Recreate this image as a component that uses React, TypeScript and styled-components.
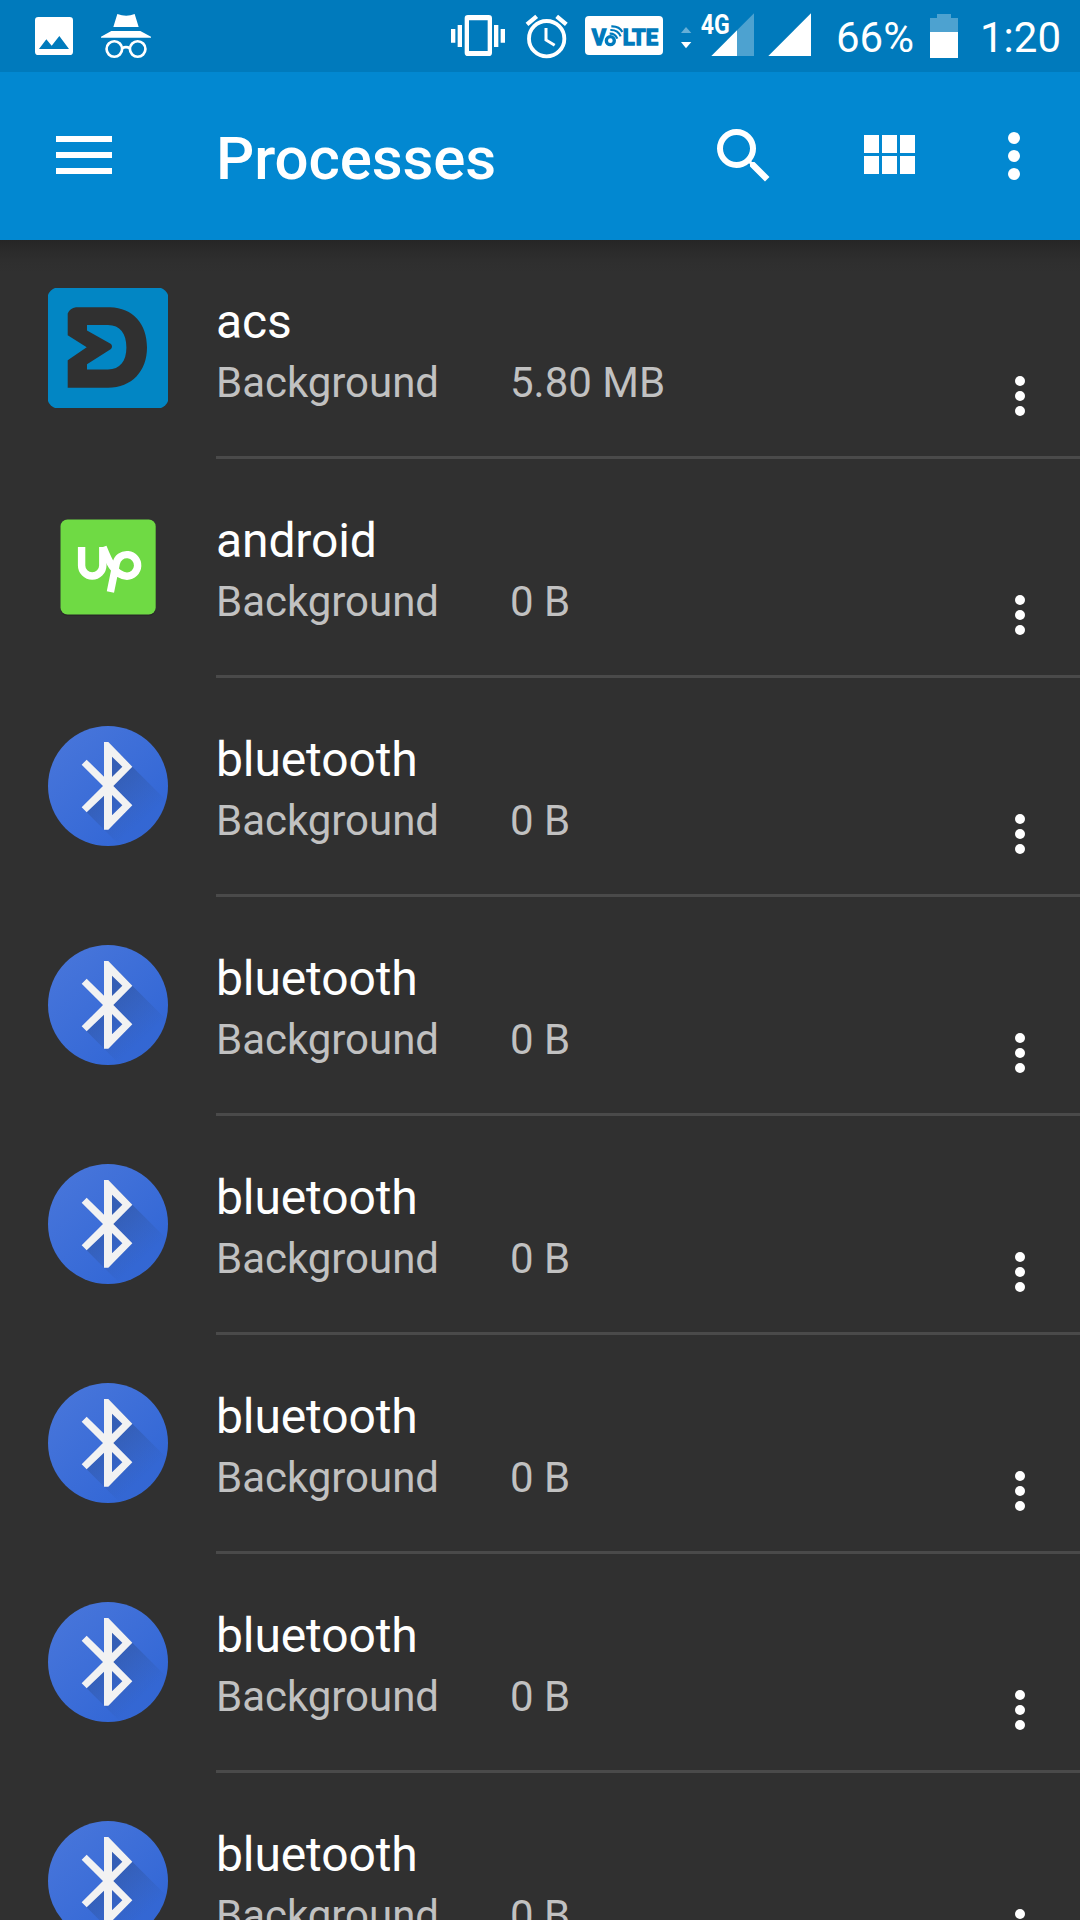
import React from "react";
import styled, { createGlobalStyle } from "styled-components";

const GlobalStyle = createGlobalStyle`
  * { box-sizing: border-box; }
  body { margin: 0; background: #303030; overflow: hidden; }
`;

const Screen = styled.main`
  display: flex;
  flex-direction: column;
  width: 1080px;
  height: 1920px;
  overflow: hidden;
  background: #303030;
  color: #fff;
  font-family: Roboto, "Noto Sans", sans-serif;
`;

const StatusBar = styled.header`
  display: flex;
  flex: none;
  justify-content: space-between;
  height: 72px;
  padding: 0 17px 0 33px;
  background: #007abc;
`;

const StatusGroup = styled.div`
  display: flex;
  align-items: center;
`;

const StatusGlyph = styled.svg<{ $w: number; $gap?: number }>`
  display: block;
  flex: none;
  width: ${(p) => p.$w}px;
  height: 72px;
  margin-right: ${(p) => p.$gap ?? 0}px;
`;

const StatusText = styled.span<{ $w: number; $gap?: number }>`
  flex: none;
  width: ${(p) => p.$w}px;
  margin-right: ${(p) => p.$gap ?? 0}px;
  padding-top: 3px;
  font-size: 42px;
  line-height: 50px;
  white-space: nowrap;
`;

const Toolbar = styled.nav`
  display: flex;
  flex: none;
  align-items: center;
  height: 168px;
  padding: 0 30px 0 56px;
  background: #0288d1;
`;

const MenuButton = styled.button`
  display: flex;
  flex-direction: column;
  gap: 10px;
  width: 56px;
  margin-right: 104px;
  padding: 0 0 2px;
  border: 0;
  background: none;
`;

const MenuLine = styled.span`
  height: 6px;
  background: #fff;
`;

const Heading = styled.h1`
  flex: 1;
  margin: 0;
  padding-top: 6px;
  font-size: 60px;
  font-weight: 500;
  letter-spacing: -0.12px;
  line-height: 70px;
`;

const ToolbarActions = styled.div`
  display: flex;
  align-items: center;
`;

const Icon = styled.svg<{ $size: number; $gap?: number }>`
  display: block;
  flex: none;
  width: ${(p) => p.$size}px;
  height: ${(p) => p.$size}px;
  margin-right: ${(p) => p.$gap ?? 0}px;
  fill: #fff;
`;

const List = styled.ul`
  display: flex;
  flex-direction: column;
  flex: 1;
  min-height: 0;
  margin: 0;
  padding: 0;
  list-style: none;
  background: linear-gradient(#252525 0, #2a2a2a 9px, #2e2e2e 20px, #303030 32px) no-repeat 0 0 / 100% 32px;
`;

const Row = styled.li`
  display: flex;
  flex: none;
  height: 219px;
  padding-left: 48px;
`;

const AppIcon = styled.svg`
  display: block;
  flex: none;
  width: 120px;
  height: 120px;
  margin: 48px 48px 0 0;
  overflow: visible;
`;

const RowBody = styled.div`
  display: flex;
  flex: 1;
  justify-content: space-between;
  padding: 54px 30px 0 0;
  border-bottom: 3px solid #4a4a4a;
`;

const Name = styled.div`
  font-size: 48px;
  letter-spacing: -0.12px;
  line-height: 56px;
`;

const Details = styled.div`
  display: flex;
  gap: 71px;
  margin-top: 8px;
  color: #c1c1c1;
  font-size: 42px;
  line-height: 50px;
  white-space: nowrap;
`;

const State = styled.span`
  letter-spacing: -0.03px;
`;

const RowMenu = styled.div`
  padding-top: 72px;
`;

const MoreIcon = ({ size }: { size: number }) => (
  <Icon viewBox="0 0 24 24" $size={size}>
    <circle cx="12" cy="6" r="2" />
    <circle cx="12" cy="12" r="2" />
    <circle cx="12" cy="18" r="2" />
  </Icon>
);

const AcsIcon = () => (
  <AppIcon viewBox="0 0 120 120">
    <path
      fill="#0286c4"
      d="M7 0H113Q115 0.5 117.3 2.7Q119.5 5 120 7V113Q119.5 115 117.3 117.3Q115 119.5 113 120H7Q5 119.5 2.7 117.3Q0.5 115 0 113V7Q0.5 5 2.7 2.7Q5 0.5 7 0Z"
    />
    <path
      fill="#303030"
      fillRule="evenodd"
      d="M19.7 25.5Q22 20 28 19.3H62C85 19.8 99 36 99 59.5C99 83 84 99.7 60 99.7H19.7V72.3L38.7 59.3L19.7 47.3ZM39 37V42.5L63 56Q65 58.5 63 61L39 76.3V81.5H60C72 81.5 78.4 73 78.4 59.5C78.4 45.5 72 37 60 37Z"
    />
  </AppIcon>
);

const UpIcon = () => (
  <AppIcon viewBox="0 0 120 120">
    <rect x="12.5" y="14" width="95.2" height="95" rx="7" fill="#222" opacity=".55" />
    <rect x="12.5" y="12.5" width="95.2" height="95" rx="7" fill="#6fda44" />
    <g fill="none" stroke="#fff" strokeWidth="7.4">
      <path d="M33.6 40V58.4a10.6 10.6 0 0 0 21.2 0V40" />
      <path d="M55 40C59 50 66 69.2 79 69.2a10.8 10.8 0 1 0 -10.8 -12.6L62.4 85" />
    </g>
  </AppIcon>
);

const BluetoothIcon = ({ id }: { id: string }) => (
  <AppIcon viewBox="54 48 360 360">
    <defs>
      <linearGradient id={`${id}-disc`} x1="0.1" y1="0.1" x2="0.75" y2="0.8">
        <stop offset="0" stopColor="#4775da" />
        <stop offset="1" stopColor="#3468d6" />
      </linearGradient>
      <linearGradient id={`${id}-shade`} gradientUnits="userSpaceOnUse" x1="230" y1="220" x2="335" y2="335">
        <stop offset="0" stopColor="#2f549f" stopOpacity=".6" />
        <stop offset="0.5" stopColor="#2f549f" stopOpacity=".32" />
        <stop offset="1" stopColor="#2f549f" stopOpacity=".05" />
      </linearGradient>
      <clipPath id={`${id}-clip`}>
        <circle cx="234" cy="228" r="180" />
      </clipPath>
    </defs>
    <circle cx="234" cy="228" r="180" fill={`url(#${id}-disc)`} />
    <g clipPath={`url(#${id}-clip)`}>
      <path fill={`url(#${id}-shade)`} d="M235 96L307 170L447 310V450H313L170 307L222 255Z" />
    </g>
    <path
      fill="#f2f2f2"
      fillRule="evenodd"
      d="M222 96H235L307 170L250 228L307 286L235 359H222V257L170 307L155 292L219 228L155 164L170 149L222 200ZM246 140V201L277 170ZM246 255V316L277 286Z"
    />
  </AppIcon>
);

type Kind = "acs" | "up" | "bluetooth";

const processes: { name: string; size: string; kind: Kind }[] = [
  { name: "acs", size: "5.80 MB", kind: "acs" },
  { name: "android", size: "0 B", kind: "up" },
  ...Array.from({ length: 6 }, () => ({ name: "bluetooth", size: "0 B", kind: "bluetooth" as Kind })),
];

const StatusIcons = () => (
  <StatusBar>
    <StatusGroup>
      <StatusGlyph viewBox="99 0 126 216" $w={42} $gap={25}>
        <path
          fill="#fff"
          fillRule="evenodd"
          d="M115 51H209Q219 51 219 61V155Q219 165 209 165H115Q105 165 105 155V61Q105 51 115 51ZM117 147H207L178 108L155 137L139 118Z"
        />
      </StatusGlyph>
      <StatusGlyph viewBox="300 0 156 216" $w={52}>
        <path fill="#fff" d="M352 42Q379 53 404 42L416 81H340ZM334 93H421L453 110V113H303V110Z" />
        <g fill="none" stroke="#fff" strokeWidth="8">
          <circle cx="343" cy="147" r="23.3" />
          <circle cx="413" cy="147" r="23.3" />
          <path d="M366 145Q378 138 390 145" />
        </g>
      </StatusGlyph>
    </StatusGroup>
    <StatusGroup>
      <StatusGlyph viewBox="60 0 168 216" $w={56} $gap={18}>
        <path
          fill="#fff"
          fillRule="evenodd"
          d="M114 45H176Q186 45 186 55V158Q186 168 176 168H114Q104 168 104 158V55Q104 45 114 45ZM117 61V153H173V61ZM83 75H96V141H83ZM63 87H76V128H63ZM192 75H205V141H192ZM212 87H225V128H212Z"
        />
      </StatusGlyph>
      <StatusGlyph viewBox="282 0 132 216" $w={44} $gap={17}>
        <g fill="none" stroke="#fff">
          <circle cx="350" cy="116" r="53" strokeWidth="11.5" />
          <path strokeWidth="9" d="M348 84V120L374 136" />
          <path strokeWidth="13" d="M291 73L320 49M380 49L409 73" />
        </g>
      </StatusGlyph>
      <StatusGlyph viewBox="465 0 234 216" $w={78} $gap={17}>
        <rect x="465" y="48" width="234" height="117" rx="12" fill="#fff" />
        <g fill="#007abc" stroke="#007abc" strokeWidth="4" fontFamily="Roboto, sans-serif" fontWeight="700" fontSize="65">
          <text x="485" y="134" textLength="43" lengthAdjust="spacingAndGlyphs">V</text>
          <text x="578" y="134" textLength="106" lengthAdjust="spacingAndGlyphs">LTE</text>
        </g>
        <g fill="none" stroke="#007abc">
          <circle cx="541" cy="122" r="12" strokeWidth="10" />
          <path strokeWidth="6.5" d="M539 101Q555 100 562 116M541 90Q564 89 572 109M544 79Q568 78 577 96" />
        </g>
      </StatusGlyph>
      <StatusGlyph viewBox="750 0 222 216" $w={74} $gap={14}>
        <path fill="#fff" opacity=".4" d="M753 99L768 81L784 99Z" />
        <path fill="#fff" d="M753 126H784L768 145Z" />
        <path fill="#fff" opacity=".3" d="M921 91L972 40V168H921Z" />
        <path fill="#fff" d="M844 168L921 91V168Z" />
        <text
          x="812"
          y="102"
          fill="#fff"
          fontFamily="Roboto, sans-serif"
          fontWeight="700"
          fontSize="82"
          textLength="87"
          lengthAdjust="spacingAndGlyphs"
        >
          4G
        </text>
      </StatusGlyph>
      <StatusGlyph viewBox="54 0 132 216" $w={44} $gap={24}>
        <path fill="#fff" d="M55 168L183 40V168Z" />
      </StatusGlyph>
      <StatusText $w={78} $gap={16}>66%</StatusText>
      <StatusGlyph viewBox="540 0 84 216" $w={28} $gap={22}>
        <path fill="#fff" opacity=".3" d="M540 54H561V42H603V54H624V96H540Z" />
        <path fill="#fff" d="M540 96H624V174H540Z" />
      </StatusGlyph>
      <StatusText $w={83}>1:20</StatusText>
    </StatusGroup>
  </StatusBar>
);

export default function App() {
  return (
    <Screen>
      <GlobalStyle />
      <StatusIcons />
      <Toolbar>
        <MenuButton aria-label="Menu">
          <MenuLine />
          <MenuLine />
          <MenuLine />
        </MenuButton>
        <Heading>Processes</Heading>
        <ToolbarActions>
          <Icon viewBox="0 0 24 24" $size={72} $gap={72}>
            <path d="M15.5 14h-.79l-.28-.27A6.471 6.471 0 0 0 16 9.5 6.5 6.5 0 1 0 9.5 16c1.61 0 3.09-.59 4.23-1.57l.27.28v.79l5 4.99L20.49 19l-4.99-5zm-6 0C7.01 14 5 11.99 5 9.5S7.01 5 9.5 5 14 7.01 14 9.5 11.99 14 9.5 14z" />
          </Icon>
          <Icon viewBox="0 0 24 24" $size={72} $gap={54}>
            <path d="M4 11h5V5H4v6zm0 7h5v-6H4v6zm6 0h5v-6h-5v6zm6 0h5v-6h-5v6zm-6-7h5V5h-5v6zm6-6v6h5V5h-5z" />
          </Icon>
          <MoreIcon size={72} />
        </ToolbarActions>
      </Toolbar>
      <List>
        {processes.map((p, i) => (
          <Row key={i}>
            {p.kind === "acs" && <AcsIcon />}
            {p.kind === "up" && <UpIcon />}
            {p.kind === "bluetooth" && <BluetoothIcon id={`bt${i}`} />}
            <RowBody>
              <div>
                <Name>{p.name}</Name>
                <Details>
                  <State>Background</State>
                  <span>{p.size}</span>
                </Details>
              </div>
              <RowMenu>
                <MoreIcon size={60} />
              </RowMenu>
            </RowBody>
          </Row>
        ))}
      </List>
    </Screen>
  );
}
